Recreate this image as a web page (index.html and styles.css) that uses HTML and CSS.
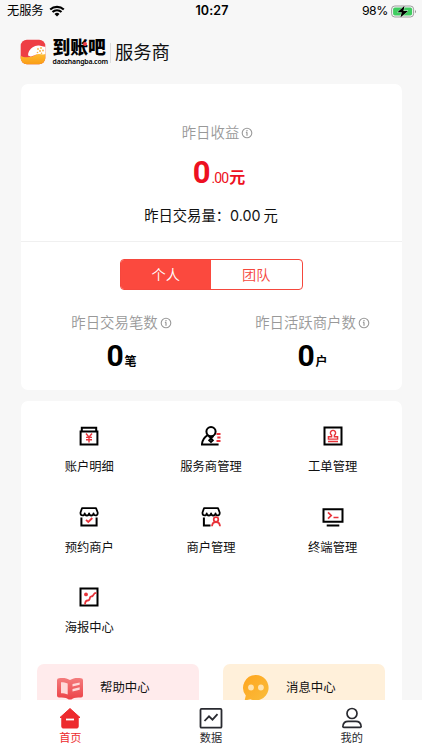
FILE: index.html
```html
<!DOCTYPE html>
<html lang="zh-CN">
<head>
<meta charset="utf-8">
<title>到账吧 服务商</title>
<link rel="stylesheet" href="styles.css">
</head>
<body>
<svg class="defs" width="0" height="0">
  <defs>
    <symbol id="info" viewBox="0 0 12 12"><circle cx="6" cy="6" r="4.8" fill="none" stroke="currentColor" stroke-width="1.1"/><path d="M6 5.2v3.5M6 3v1.2M4.9 5.4H6" fill="none" stroke="currentColor" stroke-width="1.2"/></symbol>
    <symbol id="awning" viewBox="0 0 20 20"><path d="M3 1.2h14l1.7 4.3v.8a2.1 2.1 0 0 1-4.2 0 2.2 2.2 0 0 1-4.4 0 2.2 2.2 0 0 1-4.4 0 2.1 2.1 0 0 1-4.2 0v-.8z" fill="none" stroke="#000" stroke-width="1.8" stroke-linejoin="round"/></symbol>
  </defs>
</svg>
<div class="phone">
  <div class="status">
    <div class="carrier"><span>无服务</span>
      <svg width="16" height="12" viewBox="0 0 16 12"><path d="M1.2 4.6a9.8 9.8 0 0 1 13.6 0M3.5 7a6.5 6.5 0 0 1 9 0" fill="none" stroke="#000" stroke-width="2.1"/><path d="M8 11.5 5.5 9a3.6 3.6 0 0 1 5 0z"/></svg>
    </div>
    <div class="time">10:27</div>
    <div class="power"><span>98%</span>
      <svg width="26" height="13" viewBox="0 0 26 13"><rect x=".6" y="1" width="22" height="11" rx="3.2" fill="none" stroke="#929292" stroke-width=".9"/><rect x="2.1" y="2.5" width="19" height="8" rx="1.8" fill="#3fcc60"/><path d="M24 5v3.2q1-.5 1-1.6T24 5z" fill="#929292"/><path d="M13.5.8 6.5 7.2h4.3L9.4 12.4 17 5.9h-4.6z" fill="#000" stroke="#f7f7f7" stroke-width=".7" paint-order="stroke"/></svg>
    </div>
  </div>
  <header class="header">
    <svg class="logo" width="26" height="26" viewBox="0 0 26 26">
      <defs><linearGradient id="gold" x1="0" y1="0" x2="0" y2="1"><stop offset="0" stop-color="#ffc33a"/><stop offset="1" stop-color="#f99a12"/></linearGradient><clipPath id="tile"><rect x=".7" y=".7" width="24.6" height="24.6" rx="6.2"/></clipPath></defs>
      <g clip-path="url(#tile)"><path fill="#ee3e45" d="M0 0h26v26H0z"/><path fill="url(#gold)" d="M0 16.500c4 2.500 9 2.300 13.500.5S20 12 26 13v13H0z"/><path fill="#fff" d="M8.5 13.500C10 9 15 6 19 6.500c3.500.5 5.500 1.500 7 1.500v7c-3 .8-4.800.2-7 0-2.800 0-4.800 2-8 2.400-3 .3-3.300-1.400-2.500-3.900z"/><g fill="#f9b243"><circle cx="18" cy="10" r=".9"/><circle cx="21" cy="9" r=".9"/><circle cx="20" cy="12" r="1"/><circle cx="23" cy="11.500" r=".9"/><circle cx="17.500" cy="13.500" r=".8"/><circle cx="21.500" cy="14.200" r=".8"/></g></g>
    </svg>
    <div class="brand"><b>到账吧</b><small>daozhangba.com</small><i class="dot"></i></div>
    <div class="role">服务商</div>
  </header>
  <main class="content">
    <section class="card summary">
      <div class="income">
        <div class="muted">昨日收益<svg class="info"><use href="#info"/></svg></div>
        <div class="amount"><b>0</b><span>.00</span><em>元</em></div>
        <div class="volume">昨日交易量：<span>0.00</span>元</div>
      </div>
      <div class="segment"><span class="on">个人</span><span>团队</span></div>
      <div class="stats">
        <div class="stat"><div class="muted">昨日交易笔数<svg class="info"><use href="#info"/></svg></div><div class="count"><b>0</b><em>笔</em></div></div>
        <div class="stat"><div class="muted">昨日活跃商户数<svg class="info"><use href="#info"/></svg></div><div class="count"><b>0</b><em>户</em></div></div>
      </div>
    </section>
    <section class="card services">
      <div class="grid">
        <div class="item"><svg class="icon" viewBox="0 0 20 20"><path d="M1.6 5.6h16.8v12.8H1.6zM2.8 5.500V1.700h14.400v3.800" fill="none" stroke="#000" stroke-width="2"/><path d="m7 7.500 3 3.700 3-3.700M10 11v5.500M7 11.400h6M7 13.800h6" fill="none" stroke="#e8333a" stroke-width="1.400"/></svg><span>账户明细</span></div>
        <div class="item"><svg class="icon" viewBox="0 0 20 20"><circle cx="10" cy="5.600" r="4.600" fill="none" stroke="#000" stroke-width="2"/><path d="M6.800 9.200C3.500 11 1.400 14 .9 18.500h16.700M7.500 10l2.500 2 2.500-2M10 12l-1.800 2.300L10 16l1.800-1.700z" fill="none" stroke="#000" stroke-width="1.900"/><path d="M15.500 8h4M16.300 11.500h3.200M15.500 15h4" stroke="#e8333a" stroke-width="1.900"/></svg><span>服务商管理</span></div>
        <div class="item"><svg class="icon" viewBox="0 0 20 20"><path d="M1.500 1.500h17v17h-17z" fill="none" stroke="#000" stroke-width="2"/><path d="M8.600 9.200a2.600 2.600 0 1 1 2.800 0v1.600h3.200v2.300H5.400v-2.300h3.200zM5 15.500h10" fill="none" stroke="#e8333a" stroke-width="1.400"/></svg><span>工单管理</span></div>
        <div class="item"><svg class="icon" viewBox="0 0 20 20"><use href="#awning"/><path d="M2.400 10.500v8h15.200v-8" fill="none" stroke="#000" stroke-width="2"/><path d="m7 12.800 2.300 2.200 4-4" fill="none" stroke="#e8333a" stroke-width="1.800"/></svg><span>预约商户</span></div>
        <div class="item"><svg class="icon" viewBox="0 0 20 20"><use href="#awning"/><path d="M2.900 10.500v8h6.600" fill="none" stroke="#000" stroke-width="2"/><circle cx="15" cy="12.500" r="2.300" fill="none" stroke="#e8333a" stroke-width="1.700"/><path d="M11 19.300c.2-2.800 1.800-4.300 4-4.300s3.800 1.500 4 4.300" fill="none" stroke="#e8333a" stroke-width="1.800"/></svg><span>商户管理</span></div>
        <div class="item"><svg class="icon wide" viewBox="0 0 22 20"><path d="M1.500 2.300h19v12.400h-19zM4.700 18.500h12.600" fill="none" stroke="#000" stroke-width="2"/><path d="m6 5.300 3.200 3.200L6 11.700M11.500 10.500h5" fill="none" stroke="#e8333a" stroke-width="1.700"/></svg><span>终端管理</span></div>
        <div class="item"><svg class="icon" viewBox="0 0 20 20"><path d="M1.500 1.500h17v17h-17z" fill="none" stroke="#000" stroke-width="2"/><circle cx="7" cy="7.400" r="1.900" fill="#e8333a"/><path d="M6 17.500c.1-2.800 1-4 2.700-4 2 0 2-1 2.200-2.600.2-1.500 1.600-1.300 2.500-1.800 1.500-.8.700-3.200 4.100-3.200" fill="none" stroke="#e8333a" stroke-width="1.800"/></svg><span>海报中心</span></div>
      </div>
      <div class="links">
        <div class="link help"><svg width="28" height="26" viewBox="0 0 28 26"><defs><linearGradient id="book" x1="0" y1="0" x2="0" y2="1"><stop offset="0" stop-color="#f47c7d"/><stop offset="1" stop-color="#ec4146"/></linearGradient></defs><path fill="url(#book)" d="M3 3.200C7 2.600 11 3 14 5c3-2 7-2.400 11-1.800q2 .2 2 2v15.300q0 2-2 2c-4 0-6.500 0-8.500 1.200-1.500 1.200-3.500 1.200-5 0C9.500 22.500 7 22.500 3 22.500q-2 0-2-2V5.200q0-1.800 2-2z"/><path fill="#ffd9d9" d="M5 7.200c2.600 0 4.600.4 6.700 1.200V19.500C9.600 18.600 7.500 18.300 5 18.300zM16.500 9.100l7.200-1.700v2.400l-7.200 1.700zM16.500 14l7.200-1.700v2.400l-7.200 1.700z"/></svg><span>帮助中心</span></div>
        <div class="link message"><svg width="28" height="26" viewBox="0 0 28 26"><defs><linearGradient id="bubble" x1="0" y1="0" x2="1" y2="1"><stop offset="0" stop-color="#ffa51e"/><stop offset="1" stop-color="#f9bd3c"/></linearGradient></defs><path fill="url(#bubble)" d="M14 0a12.700 12.700 0 1 1-5.500 24.200L2.600 25.600 3.800 20.500A12.700 12.700 0 0 1 14 0z"/><circle cx="9" cy="12.500" r="2.900" fill="#ffe3af"/><circle cx="18.900" cy="12.500" r="2.900" fill="#ffe3af"/></svg><span>消息中心</span></div>
      </div>
    </section>
  </main>
  <nav class="tabs">
    <div class="tab active"><svg width="24" height="22" viewBox="0 0 24 22"><path d="M12 1.500 22 10.500h-1.800v9.300q0 1.200-1.200 1.200H5q-1.200 0-1.200-1.200v-9.300H2z" fill="#ed2b2e" stroke="#ed2b2e" stroke-width="1" stroke-linejoin="round"/><path d="M8 12.500h8" stroke="#fff" stroke-width="1.800"/></svg><span>首页</span></div>
    <div class="tab"><svg width="24" height="22" viewBox="0 0 24 22"><rect x="1.500" y="1.900" width="21" height="18.800" rx="1" fill="none" stroke="#292a30" stroke-width="1.800"/><path d="m5.500 14 4.500-4.700 3.500 3.400 5-5.500" fill="none" stroke="#292a30" stroke-width="1.800"/></svg><span>数据</span></div>
    <div class="tab"><svg width="24" height="22" viewBox="0 0 24 22"><circle cx="12" cy="6.500" r="5" fill="none" stroke="#292a30" stroke-width="1.700"/><path d="M3.900 20.400c-.7 0-1.200-.5-1-1.500.4-3 2.300-4.600 5.200-4.600h7.800c2.900 0 4.800 1.600 5.200 4.600.2 1-.3 1.500-1 1.500z" fill="none" stroke="#292a30" stroke-width="1.700"/></svg><span>我的</span></div>
  </nav>
</div>
</body>
</html>
```
FILE: styles.css
```css
* { box-sizing: border-box; }
body { margin: 0; font-family: Inter, "Noto Sans CJK SC", sans-serif; color: #111; }
svg { display: block; flex: none; }
em { font-style: normal; }
.defs { position: absolute; }
.phone { width: 422px; height: 750px; display: flex; flex-direction: column; overflow: hidden; background: #f7f7f7; }
.status { height: 22px; flex: none; display: grid; grid-template-columns: 1fr auto 1fr; align-items: center; padding: 0 5px 0 7px; line-height: 20px; font-size: 12.300px; color: #000; }
.carrier, .power { display: flex; align-items: center; }
.carrier { gap: 5px; font-size: 12.200px; }
.time { font-weight: 600; font-size: 12.500px; letter-spacing: .1px; }
.power { justify-content: flex-end; gap: 3px; letter-spacing: -.4px; }
.header { height: 62px; flex: none; display: flex; align-items: flex-start; padding: 17px 0 0 20px; }
.brand { position: relative; width: 57.500px; height: 27px; margin-left: 6.500px; display: flex; flex-direction: column; color: #000; }
.brand b { font-size: 17.800px; line-height: 18px; font-weight: 900; white-space: nowrap; }
.brand small { font-family: "Noto Sans", sans-serif; font-size: 6.900px; line-height: 7px; font-weight: 600; letter-spacing: -.15px; white-space: nowrap; margin-top: 1px; }
.dot { position: absolute; left: 30px; top: 3px; width: 4px; height: 4px; border-radius: 50%; background: #ee3e45; }
.role { height: 20px; margin: 4px 0 0; padding-left: 4px; border-left: 1px solid #ddd; font-size: 18.300px; line-height: 18px; white-space: nowrap; }
.content { flex: 1; min-height: 0; overflow: hidden; padding: 0 20.500px; }
.card { background: #fff; border-radius: 7px; }
.summary { height: 306px; margin-bottom: 11px; }
.income { height: 158px; border-bottom: 1.500px solid #f0f0f0; padding-top: 38px; text-align: center; }
.muted { display: flex; justify-content: center; align-items: center; font-size: 14.400px; line-height: 22px; color: #999; font-weight: 350; white-space: nowrap; }
.income .muted { padding-left: 13px; }
.info { width: 12px; height: 12px; margin-left: 2px; }
.amount { display: flex; justify-content: center; align-items: baseline; height: 40px; margin-top: 9px; padding-left: 16px; line-height: 40px; color: #ed1021; }
.amount b, .count b { font-family: Roboto, sans-serif; font-weight: 700; }
.amount b { font-size: 31px; }
.amount span { font-family: Roboto, sans-serif; font-size: 14px; letter-spacing: -.9px; margin: 0 1px 0 1px; }
.amount em { font-size: 16px; font-weight: 700; }
.volume { margin-top: 12px; font-size: 14.300px; line-height: 22px; white-space: nowrap; }
.volume span { margin-right: 3px; }
.segment { display: flex; width: 183px; height: 31px; margin: 17px auto 0; border: 1px solid #f5473d; border-radius: 4px; overflow: hidden; }
.segment span { flex: 1; text-align: center; font-size: 14.200px; line-height: 29px; color: #f5473d; font-weight: 350; }
.segment .on { background: #fb493e; color: #fff; }
.stats { display: grid; grid-template-columns: 1fr 1fr; margin: 22px -5px 0 6px; }
.stat:last-child { padding-left: 2px; }
.count { display: flex; justify-content: center; align-items: baseline; color: #000; line-height: 36px; height: 36px; margin-top: 4px; }
.count b { font-size: 30px; }
.count em { font-size: 12px; font-weight: 700; margin-left: 1px; }
.services { height: 360px; padding: 25px 8px 0; }
.grid { display: grid; grid-template-columns: repeat(3, 1fr); grid-auto-rows: 80.500px; }
.item { display: flex; flex-direction: column; align-items: center; }
.icon { width: 20px; height: 20px; }
.icon.wide { width: 22px; }
.item span { margin-top: 11px; font-size: 12.300px; line-height: 20px; }
.links { display: grid; grid-template-columns: 162px 162px; gap: 24px; padding-left: 8.500px; margin-top: -4px; }
.link { height: 58px; border-radius: 7px; display: flex; align-items: flex-start; padding: 11px 0 0 19px; font-size: 12.400px; line-height: 25px; }
.link span { margin-left: 16px; }
.help { background: #ffebec; }
.message { background: #fff0da; }
.tabs { height: 50px; flex: none; background: #fff; display: grid; grid-template-columns: repeat(3, 140.700px); padding-top: 7px; }
.tab { display: flex; flex-direction: column; align-items: center; font-size: 11.200px; line-height: 16px; color: #292a30; }
.tab span { margin-top: 1px; }
.active { color: #ed2b2e; }
```
